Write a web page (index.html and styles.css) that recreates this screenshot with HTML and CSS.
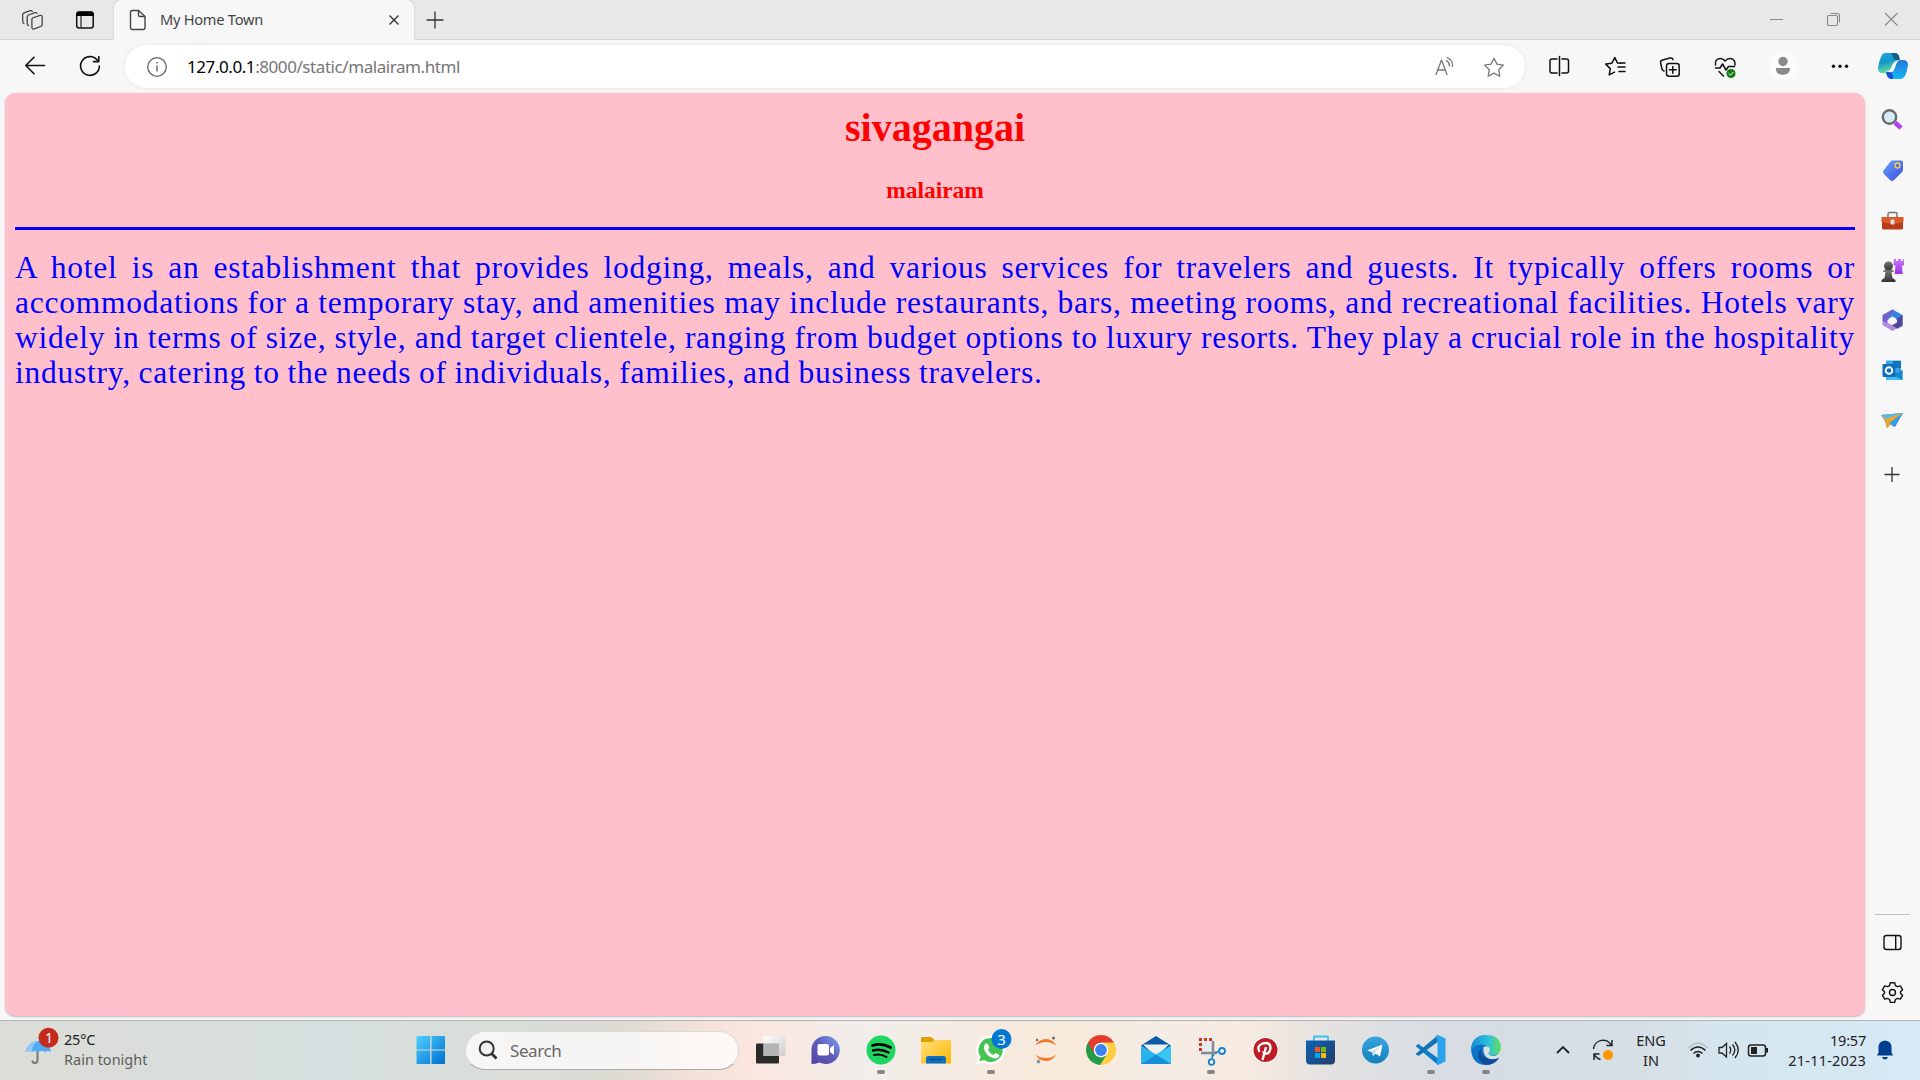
FILE: index.html
```html
<!DOCTYPE html>
<html lang="en">
<head>
<meta charset="utf-8">
<title>My Home Town</title>
<link rel="stylesheet" href="styles.css">
</head>
<body>
<header class="tabstrip">
  <div class="tab-actions">
    <svg class="icon" width="114" height="40" viewBox="0 0 114 40">
      <g fill="none" stroke="#444" stroke-width="1.3" stroke-linejoin="round" stroke-linecap="round">
        <path d="M32.5 18l7.500-2.600q2.200-.5 2.200 1.500v7.600q0 1.500-1.500 2l-6.500 2.400q-2.300.6-2.300-1.600v-7.600q0-1.300.6-1.700z"/>
        <path d="M28.500 25.500q-1.300-.3-1.300-2v-6.700q0-1.300 1.400-1.800l6.400-2.300q1.500-.4 2 .6"/>
        <path d="M24 23.500q-1.300-.4-1.300-2v-6.700q0-1.400 1.400-1.900l6.200-2.200q1.400-.4 2 .5"/>
      </g>
      <rect x="76.700" y="12" width="16.500" height="16" rx="2.500" fill="none" stroke="#111" stroke-width="1.500"/>
      <path d="M76.500 16v-2q0-2.500 2.500-2.500h12q2.500 0 2.500 2.500v2z" fill="#000"/><path d="M81 16v12" stroke="#222" stroke-width="1.200"/>
    </svg>
  </div>
  <div class="tab">
    <svg class="icon" width="20" height="24" viewBox="0 0 20 24"><g fill="none" stroke="#444" stroke-width="1.400" stroke-linejoin="round"><path d="M4.500 2.500h6l6.500 6v11q0 2-2 2h-10.500q-2 0-2-2v-15q0-2 2-2z"/><path d="M10.500 2.500v4.500q0 1.500 1.500 1.500h5"/></g></svg>
    <span class="tab-title">My Home Town</span>
    <svg class="icon tab-close" width="12" height="12" viewBox="0 0 12 12"><path d="M1.500 1.500l9 9m0-9l-9 9" stroke="#333" stroke-width="1.400"/></svg>
  </div>
  <svg class="icon new-tab" width="18" height="18" viewBox="0 0 18 18"><path d="M.5 9h17M9 .5v17" stroke="#333" stroke-width="1.300"/></svg>
  <svg class="icon window-controls" width="150" height="40" viewBox="0 0 150 40"><g fill="none" stroke="#8a8a8a" stroke-width="1.100"><path d="M0 19.500h13M115 13l12.500 12.500m0-12.500l-12.500 12.500"/><rect x="57.500" y="15.500" width="10" height="10" rx="1"/><path d="M60.500 13.500h7q2 0 2 2v7"/></g></svg>
</header>

<nav class="toolbar">
  <svg class="icon" width="125" height="53" viewBox="0 0 125 53"><g fill="none" stroke="#111" stroke-width="1.600" stroke-linecap="round" stroke-linejoin="round"><path d="M44.500 25.500h-18.500m8-8.200l-8.200 8.200 8.200 8.200"/><path d="M99.400 26a9.400 9.400 0 1 1-2.300-6.200l1.600 1.800m.1-5v5h-5.300"/></g></svg>
  <div class="address">
    <svg class="icon" width="22" height="22" viewBox="0 0 22 22"><circle cx="11" cy="11" r="9.300" fill="none" stroke="#666" stroke-width="1.300"/><path d="M11 9.500v6M11 6v1.600" stroke="#666" stroke-width="1.400"/></svg>
    <span class="url"><b>127.0.0.1</b>:8000/static/malairam.html</span>
    <svg class="icon" width="80" height="30" viewBox="0 0 80 30"><g fill="none" stroke="#777" stroke-width="1.300" stroke-linejoin="round" stroke-linecap="round"><path d="M6 22.500l5.500-14.500 5.500 14.500M7.800 18h7.400M16.500 8.500q3 2 3 5.500M17 5.500q6 2.500 5.500 9"/><path d="M64 6.200l2.900 5.900 6.500 1-4.700 4.600 1.100 6.500-5.800-3.100-5.800 3.100 1.100-6.500-4.700-4.600 6.500-1z"/></g></svg>
  </div>
  <svg class="icon" width="395" height="53" viewBox="1525 40 395 53">
    <defs>
      <linearGradient id="cpA" x1="0" y1="0" x2=".3" y2="1"><stop stop-color="#18a8e8"/><stop offset=".5" stop-color="#1596c8"/><stop offset="1" stop-color="#63dfa0"/></linearGradient>
      <linearGradient id="cpB" x1="0" y1="0" x2="0" y2="1"><stop stop-color="#2275d7"/><stop offset="1" stop-color="#18b8fa"/></linearGradient>
    </defs>
    <g fill="none" stroke="#111" stroke-width="1.500" stroke-linejoin="round" stroke-linecap="round">
      <path d="M1557 59h-5q-2 0-2 2v10q0 2 2 2h5M1562 59h4.500q2 0 2 2v10q0 2-2 2h-4.500M1559.500 56.500v19"/>
      <path d="M1621 63.300l-3.600-.4-2.600-5.400-2.900 5.700-6.200.9 4.600 4.500-1.100 6.300 5.300-2.700M1619.500 63h5.500M1618 67h7M1619 71.500h6"/>
      <path d="M1664 71q-1.500-.5-2-2l-1.400-6q-.4-2.500 2-3l7.400-2q2.500-.5 3 1.700"/><rect x="1666.500" y="63.500" width="12.700" height="12.700" rx="2.500"/><path d="M1672.800 66.500v6.700m-3.400-3.400h6.800"/>
      <path d="M1715.500 65q-.8-6 4.500-6.500 3-.2 5 2.500 2.500-2.800 5.500-2.500 5 .6 4.500 6.500M1715.500 68h4.500l2.500-4 3.500 6 2.500-3.500h6M1719 71.500l4.500 4.500"/>
    </g>
    <circle cx="1731" cy="73.500" r="4.500" fill="#107c10"/><path d="M1728.700 73.500l1.700 1.700 3-3.200" fill="none" stroke="#fff"/>
    <circle cx="1783" cy="66" r="14" fill="#fcfcfc"/><circle cx="1783" cy="61.500" r="4.700" fill="#8b8b8b"/><path d="M1776 68h14v1q0 5.700-7 5.700t-7-5.700z" fill="#8b8b8b"/>
    <g fill="#111"><circle cx="1833.500" cy="66.300" r="1.700"/><circle cx="1840" cy="66.300" r="1.700"/><circle cx="1846.500" cy="66.300" r="1.700"/></g>
    <path d="M1885 53h9q3 0 4 3l1 4q-5 0-7 6l-2 5q-1 2-5 2h-3q-4 0-4-5 1-7 3-11 1.500-4 4-4z" fill="url(#cpA)"/>
    <path d="M1891 53h4q3 0 4 3l1 4h-4q-2 0-3-3z" fill="#155c82"/>
    <path d="M1901 79h-9q-4 0-5-4l-1-3q4 0 6-6l2-4q1-2 5-2h4q5 0 5 5-1 7-3 11-1.500 3-4 3z" fill="url(#cpB)"/>
    <path d="M1893 79q-5 0-6-3.500l-1-3 5-1.500 2 5z" fill="#1750d8"/>
    <path d="M1886 72q4-1 5.500-5 2-7 8.500-7-3 1-4 5l-2 5q-1.500 3-5 2z" fill="#f7f7f7"/>
  </svg>
</nav>

<main class="content">
  <article class="page">
    <h1>sivagangai</h1>
    <h3>malairam</h3>
    <hr>
    <p>
      <span class="line">A hotel is an establishment that provides lodging, meals, and various services for travelers and guests. It typically offers rooms or</span>
      <span class="line">accommodations for a temporary stay, and amenities may include restaurants, bars, meeting rooms, and recreational facilities. Hotels vary</span>
      <span class="line">widely in terms of size, style, and target clientele, ranging from budget options to luxury resorts. They play a crucial role in the hospitality</span>
      <span class="line last">industry, catering to the needs of individuals, families, and business travelers.</span>
    </p>
  </article>
  <aside class="sidebar">
    <svg class="icon" width="54" height="410" viewBox="1866 93 54 410">
      <defs>
        <linearGradient id="tag" x1="0" y1="0" x2="1" y2="1"><stop stop-color="#6aa5ff"/><stop offset="1" stop-color="#3a49e0"/></linearGradient>
        <linearGradient id="rook" x1="0" y1="0" x2="0" y2="1"><stop stop-color="#c77cf8"/><stop offset="1" stop-color="#a12cf0"/></linearGradient>
        <linearGradient id="pawn" x1="0" y1="0" x2="0" y2="1"><stop stop-color="#777"/><stop offset="1" stop-color="#333"/></linearGradient>
      </defs>
      <path d="M1895 122.500l6 5.500" stroke="#b63df0" stroke-width="4.500" stroke-linecap="butt"/>
      <circle cx="1889.500" cy="117" r="6.700" fill="#d7ecfb" stroke="#6a6a6a" stroke-width="2.400"/>
      <path d="M1892 160.500h9q2 0 2 2v7q0 1.500-1 2.500l-8 8q-2 2-4 0l-6-6q-2-2 0-4l6-8q1-1.500 2-1.500z" fill="url(#tag)"/><circle cx="1897.500" cy="165.500" r="2.500" fill="#5272d9" stroke="#ffd34a" stroke-width="1.300"/>
      <path d="M1888 217v-3q0-1.500 1.500-1.500h6q1.500 0 1.500 1.500v3" fill="none" stroke="#777" stroke-width="1.500"/>
      <rect x="1882" y="217" width="21" height="12.500" rx="1.500" fill="#b93a17"/><path d="M1881.500 217h22v5q-11 3-22 0z" fill="#dc5a2a"/><rect x="1890.500" y="219.500" width="4" height="5" rx="1" fill="#ddd"/>
      <path d="M1894 259h2v2h2v-2h3v2h2v-2h1v6l-2 1 .7 8h-8l.8-8-2-1z" fill="url(#rook)"/>
      <g fill="url(#pawn)"><circle cx="1888.500" cy="266" r="4.500"/><path d="M1883.500 270h10v2h-2l1 6 3 2v2h-14v-2l3-2 1-6h-2z"/></g>
      <path d="M1892.500 309.500l10 5.500v11l-5.500 3v-9l-4.500-3-5 3-5-4z" fill="#3984df"/><path d="M1882.500 315l10-5.500 2 1-7 8v6l-5-3z" fill="#7160cf"/><path d="M1882.500 321l5 2 5 2 5-3 5 3-10 6-10-6z" fill="#b18be0"/><path d="M1897 319l5.500-4v10.500l-5.500 3-5-3 5-3z" fill="#51469c"/><path d="M1892.500 316.500l3.500 2v4l-3.500 2-3.500-2v-4z" fill="#f7f7f7"/>
      <rect x="1886" y="360.500" width="15" height="15" rx="1" fill="#34a5e8"/><path d="M1886 368h7v-7h8v7h-8v7h-7z" fill="#1474bd"/><path d="M1886 371l8 5 8.500-6v9q0 1-1 1h-15.500z" fill="#3cbcf2"/><path d="M1902.500 370v10l-10-5z" fill="#1a87cc"/><rect x="1882.500" y="364" width="13" height="13" rx="1" fill="#0f6cbd"/><circle cx="1889" cy="370.500" r="3.300" fill="none" stroke="#fff" stroke-width="1.900"/>
      <path d="M1881 415l22-2-8 14-5-3-3 4-2-7z" fill="#2687df"/><path d="M1881 415l22-2-16 15-1.500-7z" fill="#f7a51b"/><path d="M1881 415l22-2-17 6z" fill="#5ab8f3"/><path d="M1903 413l-14 10 5 4z" fill="#379fee"/>
      <path d="M1884.500 474.500h15M1892 467v15" stroke="#333" stroke-width="1.300"/>
    </svg>
    <svg class="icon" width="54" height="110" viewBox="1866 910 54 110">
      <path d="M1875 914.500h35" stroke="#c0c0c0"/>
      <g fill="none" stroke="#111" stroke-width="1.400"><rect x="1884" y="935.500" width="17" height="14" rx="2.500"/><path d="M1895.700 935.500v14"/><circle cx="1892.500" cy="992.500" r="3"/>
      <path stroke-linejoin="round" d="M1890.300 982.700h4.400l.7 2.900 2 1.100 2.900-.8 2.300 3.800-2.100 2.100v1.500l2.100 2.100-2.300 3.800-2.900-.8-2 1.100-.7 2.900h-4.400l-.7-2.900-2-1.100-2.900.8-2.300-3.800 2.100-2.100v-1.500l-2.100-2.100 2.300-3.800 2.900.8 2-1.100z"/></g>
    </svg>
  </aside>
</main>

<footer class="taskbar">
  <div class="weather">
    <svg class="icon" width="40" height="59" viewBox="22 1021 40 59">
      <path d="M37.500 1049v11q0 3-2.700 3-2.300 0-2.300-2.500" fill="none" stroke="#777" stroke-width="2"/><path d="M25.500 1052q2-10 12.500-11 11 1 13 11-3-2-6 0-3.500-2-7 0-3-2-6 0-3-2-6.500 0z" fill="#50a9f4"/><path d="M32 1052q0-8 6-11-10 1-12.500 11 3-2 6.500 0z" fill="#8bcafb"/>
      <circle cx="48.500" cy="1037.700" r="10" fill="#c42b1c"/><text class="badge-one" x="49" y="1043" text-anchor="middle">1</text>
    </svg>
    <div class="weather-text"><span class="temp">25°C</span><span class="forecast">Rain tonight</span></div>
  </div>
  <svg class="icon start" width="30" height="30" viewBox="0 0 30 30">
    <defs><linearGradient id="win" gradientUnits="userSpaceOnUse" x1="0" y1="0" x2="28" y2="28"><stop stop-color="#53d2ff"/><stop offset="1" stop-color="#0072d2"/></linearGradient></defs>
    <path fill="url(#win)" d="M1.500 1h12.700v13.500h-13.700v-12.500q0-1 1-1zM15.500 1h12.500q1 0 1 1v12.500h-13.500zM.5 15.500h13.700v13.500h-12.700q-1 0-1-1zM15.500 15.500h13.500v12.500q0 1-1 1h-12.500z"/>
  </svg>
  <div class="search">
    <svg class="icon" width="20" height="20" viewBox="0 0 20 20"><circle cx="8.700" cy="8.500" r="7" fill="#f0f0f0" stroke="#333" stroke-width="2"/><path d="M13.500 13.500l5 5" stroke="#333" stroke-width="2.800"/></svg>
    <span>Search</span>
  </div>
  <div class="apps">
    <svg class="icon" viewBox="0 0 55 60"><defs><linearGradient id="tv" x1="0" y1="0" x2="1" y2="1"><stop stop-color="#fff"/><stop offset="1" stop-color="#c9c9c9"/></linearGradient></defs><rect x="13" y="23.500" width="23" height="20" rx="1" fill="#2a2a29"/><rect x="20.500" y="16" width="22" height="20" rx="1" fill="url(#tv)" opacity=".9"/><path d="M20.500 23.500h15.500v12.500h-15.500z" fill="#b5b5b5"/></svg>
    <svg class="icon" viewBox="0 0 55 60"><defs><linearGradient id="chat" x1="1" y1="0" x2="0" y2="1"><stop stop-color="#7aa5f4"/><stop offset=".5" stop-color="#605bb9"/><stop offset="1" stop-color="#5146a1"/></linearGradient></defs><path d="M27.500 16a14 14 0 1 1-6 26.500q-4 1.500-8 1.500v-14a14 14 0 0 1 14-14z" fill="url(#chat)"/><rect x="19.500" y="24" width="11.500" height="11.500" rx="2" fill="#fff"/><path d="M32 28l4-3v10l-4-3z" fill="#fff"/></svg>
    <svg class="icon" viewBox="0 0 55 60"><circle cx="28" cy="30" r="14.500" fill="#1ed760"/><g fill="none" stroke="#000" stroke-linecap="round"><path d="M19.500 25.500q9-3 18 2" stroke-width="2.800"/><path d="M20 30.500q8-2.300 15.500 2" stroke-width="2.400"/><path d="M21 35q6.500-1.600 12.500 2" stroke-width="2"/></g><rect class="run" x="24" y="50" width="8" height="4" rx="2"/></svg>
    <svg class="icon" viewBox="0 0 55 60"><defs><linearGradient id="fold" x1="0" y1="0" x2="1" y2="1"><stop stop-color="#ffe180"/><stop offset="1" stop-color="#ffb500"/></linearGradient></defs><path d="M13 18q0-1 1-1h9.500l3 3v5h-13.500z" fill="#e0a000"/><path d="M13 22h11l3-2h15q1 0 1 1v22.500h-30z" fill="url(#fold)"/><path d="M18 43.500v-5q0-2.500 2.500-2.500h15q2.500 0 2.500 2.500v5z" fill="#0a70c4"/><path d="M21.500 39.500h13" stroke="#07457e" stroke-width="1.200"/></svg>
    <svg class="icon" viewBox="0 0 55 60"><path d="M27.500 15.500a14.500 14.500 0 1 1-7 27l-7.500 2.300 2.200-7.300a14.500 14.500 0 0 1 12.300-22z" fill="#fff"/><path d="M27.500 18a12 12 0 1 1-6.500 22l-4.800 1.300 1.400-4.600a12 12 0 0 1 9.900-18.700z" fill="#43c352"/><path d="M22.500 23.500l2.300.2 1.600 4-1.500 2q2 4 5.500 5.300l2-2 4 2q-.5 4-5 3.500-8-1.500-10.500-10 0-3.500 1.600-5z" fill="#fff"/><circle cx="38.500" cy="19" r="10" fill="#0078d4"/><text class="badge-three" x="38.500" y="24.500" text-anchor="middle">3</text><rect class="run" x="24" y="50" width="8" height="4" rx="2"/></svg>
    <svg class="icon" viewBox="0 0 55 60"><path d="M17.500 25.500q3.500-6.500 10.500-6.500t10 6.500q-4-3.500-10-3.500t-10.500 3.500zM17.500 34.500q3.500 6.500 10.500 6.500t10-6.500q-4 3.500-10 3.500t-10.500-3.500z" fill="#f37726"/><circle cx="35.500" cy="18" r="1.500" fill="#666"/><circle cx="19" cy="20" r="1.200" fill="#666"/><circle cx="20.500" cy="41.500" r="1.900" fill="#999"/></svg>
    <svg class="icon" viewBox="0 0 55 60"><circle cx="28" cy="30" r="15" fill="#ffcd40"/><path d="M28 30l-13-7.500a15 15 0 0 0 11.500 22.400z" fill="#229c4a"/><path d="M28 37.500l6.500-4-7.500 11.500-5-5z" fill="#229c4a"/><path d="M15 22.500a15 15 0 0 1 26 0h-13l-7 11z" fill="#e33b2e"/><circle cx="28" cy="30" r="7.300" fill="#fff"/><circle cx="28" cy="30" r="5.900" fill="#3e82ef"/></svg>
    <svg class="icon" viewBox="0 0 55 60"><path d="M13 25.500l15-9.500 15 9.500-15 12z" fill="#0b5aa7"/><path d="M15 24.500h26l-13 12z" fill="#f0f0f0"/><path d="M13 25.500l15 9 15-9v18.500h-30z" fill="#28b3ec"/><path d="M13 44l30-18.500v18.500z" fill="#168ed9"/><path d="M28 34.500l15-9v18.500z" fill="#38c7f3"/></svg>
    <svg class="icon" viewBox="0 0 55 60"><rect x="14" y="16" width="18" height="20" rx="2" fill="#e6e9ed"/><path d="M17.500 31v-11.500h12" fill="none" stroke="#d13c12" stroke-width="3" stroke-dasharray="3 2"/><path d="M18 33h16M30 21v15" stroke="#888" stroke-width="2.500"/><g fill="none" stroke="#1683d0" stroke-width="1.800"><path d="M32 32.500l4-1M30 34l-1 4"/><circle cx="39" cy="31" r="3"/><circle cx="28.500" cy="42" r="2.800"/></g><rect class="run" x="24" y="50" width="8" height="4" rx="2"/></svg>
    <svg class="icon" viewBox="0 0 55 60"><circle cx="27.500" cy="30" r="13" fill="#fff"/><circle cx="27.500" cy="30" r="12" fill="#bd1c24"/><path d="M24.500 40l3.500-13M21.500 32q-3.500-6 3-8.500 8-2 8 4.500-1 6.500-5 5.500-2 0-2-2" fill="none" stroke="#fff" stroke-width="2.400"/></svg>
    <svg class="icon" viewBox="0 0 55 60"><defs><linearGradient id="store" x1="0" y1="0" x2="1" y2="1"><stop stop-color="#0b65b8"/><stop offset="1" stop-color="#223d69"/></linearGradient></defs><path d="M21 22v-5q0-.5.500-.5h13q.5 0 .5.500v5" fill="none" stroke="#37c3f2" stroke-width="1.800"/><path d="M13 20.500h29v20q0 4-4 4h-21q-4 0-4-4z" fill="url(#store)"/><path d="M22 27h5v5h-5z" fill="#f25022"/><path d="M28 27h5v5h-5z" fill="#7fba00"/><path d="M22 33h5v5h-5z" fill="#00a4ef"/><path d="M28 33h5v5h-5z" fill="#ffb900"/></svg>
    <svg class="icon" viewBox="0 0 55 60"><defs><linearGradient id="tg" x1="0" y1="0" x2="0" y2="1"><stop stop-color="#36a5dd"/><stop offset="1" stop-color="#1480be"/></linearGradient></defs><circle cx="27.500" cy="30" r="13.500" fill="url(#tg)"/><path d="M19 30.500l15.500-6-2.500 12-4.500-3-2.500 2.500-1-4z" fill="#fff"/><path d="M24 32l8.500-6-6.500 7-.5 3z" fill="#b4d5e8"/></svg>
    <svg class="icon" viewBox="0 0 55 60"><path d="M12.500 26l3-2 20.500 15-1.500 5.500z" fill="#0c7cc4"/><path d="M12.500 34l3 2 20.500-15-1.500-5.500z" fill="#1574b5"/><path d="M35 15l7.500 3.500v23l-7.500 3.500-2-1 1.500-3v-21l-2-4z" fill="#2aa3ee"/><rect class="run" x="24" y="50" width="8" height="4" rx="2"/></svg>
    <svg class="icon" viewBox="0 0 55 60"><defs><linearGradient id="ed" x1="0" y1="0" x2="1" y2="0"><stop stop-color="#168bd8"/><stop offset=".6" stop-color="#2fc3da"/><stop offset="1" stop-color="#61e052"/></linearGradient></defs><path d="M13 29q1 16 15 16 9 0 13-7-4 1-7 0l6-4 1-10-13-9q-13 0-15 14z" fill="#0c73cb"/><path d="M13 31q0-15 15-16 14 0 15 12 0 7-7 8.500-5 .5-6-2 2-2 1-5-2-4-8-4-7 .5-10 6.500z" fill="url(#ed)"/><path d="M25.500 27q4-2 6 1 1 3-1 5 0 2.500 5 3 3 0 6-1.500l-2 4q-5 2-9 0-6-3-5-11.500z" fill="#dcdfe4"/><path d="M23.500 27.500q-1.500 6 3 9.500 6 4 14.500 1-5 7-13 7-9-3-7.500-12.500z" fill="#104e99"/><rect class="run" x="24" y="50" width="8" height="4" rx="2"/></svg>
  </div>
  <svg class="icon tray-left" width="70" height="60" viewBox="1550 1020 70 60"><path d="M1557 1053l6-6 6 6" fill="none" stroke="#222" stroke-width="1.800"/><g fill="none" stroke="#222" stroke-width="1.500"><path d="M1593.500 1049a9.500 9.500 0 0 1 18-3.500M1612 1040v5.500h-5.500M1594 1060v-6h5.500M1594.500 1055q2 3.500 6 4.500"/></g><circle cx="1608" cy="1055" r="5" fill="#ff9800"/></svg>
  <div class="language"><span>ENG</span><span>IN</span></div>
  <svg class="icon status" width="82" height="60" viewBox="1686 1020 82 60"><g fill="none" stroke="#222" stroke-width="1.500"><path d="M1688.500 1048q9.500-9.500 19 0" stroke="#b6bdc2"/><path d="M1690.500 1050.500q7.500-7 15 0M1693.500 1053.500q4.500-4 9 0"/><path d="M1719 1047.500h3l4.500-4v13.500l-4.500-4h-3zM1729.500 1046.500q2.500 3.500 0 7M1732.500 1044.500q4.500 5.500 0 11M1735 1042q6.500 8 0 16" stroke-width="1.300"/><rect x="1748.500" y="1045" width="17" height="11" rx="2.500"/></g><circle cx="1698" cy="1055.500" r="1.900" fill="#222"/><rect x="1751" y="1047" width="6" height="7" fill="#222"/><path d="M1766 1048h2v4.500h-2z" fill="#222"/></svg>
  <div class="clock"><span>19:57</span><span class="date">21-11-2023</span></div>
  <svg class="icon bell" width="18" height="20" viewBox="0 0 18 20"><path d="M9 .5q6.500.5 6.500 7v5l1.500 3h-16l1.500-3v-5q0-6.500 6.500-7zM6 17h6q-1 2.500-3 2.500t-3-2.500z" fill="#003e92"/></svg>
</footer>
</body>
</html>
```
FILE: styles.css
```css
* { box-sizing: border-box; }
body {
  margin: 0;
  width: 1920px;
  height: 1080px;
  display: flex;
  flex-direction: column;
  overflow: hidden;
  background: #f7f7f7;
  font-family: "Noto Sans", sans-serif;
}
.icon { display: block; flex: none; }

.tabstrip {
  height: 40px;
  display: flex;
  align-items: center;
  background: #e8e8e8;
  box-shadow: inset 0 -1px 0 #d5d5d5;
}
.tab-actions { width: 114px; }
.tab {
  width: 300px;
  height: 40px;
  padding: 0 14px 0 14px;
  display: flex;
  align-items: center;
  background: #f7f7f7;
  border-radius: 8px 8px 0 0;
  box-shadow: 0 0 2px #bbb;
  clip-path: inset(0 -3px 0 -3px);
}
.tab-title {
  margin-left: 12px;
  padding-bottom: 2px;
  font-size: 14.600px;
  letter-spacing: -.25px;
  color: #454545;
  white-space: nowrap;
}
.tab-close { margin-left: auto; }
.new-tab { margin-left: 12px; }
.window-controls { margin-left: auto; }

.toolbar { height: 53px; display: flex; }
.address {
  width: 1400px;
  height: 43px;
  margin-top: 5px;
  padding: 0 15px 0 21px;
  display: flex;
  align-items: center;
  border-radius: 22px;
  background: #fff;
  box-shadow: 0 0 4px rgba(0, 0, 0, .08);
}
.url {
  flex: 1;
  margin-left: 19px;
  font-size: 17px;
  letter-spacing: -.43px;
  color: #767676;
}
.url b { font-weight: 400; color: #000; }

.content { flex: 1; display: flex; }
.page {
  width: 1860px;
  margin: 0 1px 4px 5px;
  padding: 10px;
  border-radius: 10px;
  background: #ffc0cb;
  box-shadow: 0 1px 2px rgba(0, 0, 0, .25);
  font-family: "Liberation Serif", serif;
}
.page h1 {
  margin: 0;
  text-align: center;
  font-size: 40px;
  line-height: 50px;
  color: #f00;
}
.page h3 {
  margin: 24px 0 0;
  text-align: center;
  font-size: 23.400px;
  line-height: 27px;
  color: #f00;
}
.page hr { height: 3px; margin: 23px 0 20px; border: 0; background: #00f; }
.page p {
  margin: 0;
  font-size: 31.500px;
  line-height: 35px;
  letter-spacing: .75px;
  word-spacing: -.9px;
  color: #00f;
}
.line { display: block; text-align-last: justify; }
.last { text-align-last: left; }
.sidebar {
  width: 54px;
  display: flex;
  flex-direction: column;
  justify-content: space-between;
}

.taskbar {
  height: 60px;
  display: flex;
  align-items: center;
  border-top: 1px solid #b0b3b5;
  background: linear-gradient(90deg, #dcddd6 0, #d9dddb 150px, #d6dfdf 330px, #d9deda 460px, #dcdbd4 620px, #f3e0d8 690px, #fbe7e0 760px, #f2eeeb 870px, #f7eadf 1000px, #f8eadb 1070px, #f4ece5 1160px, #f8ebe0 1240px, #e5e2e0 1320px, #dcdfe3 1390px, #d6dce4 1500px, #d7dfe6 1640px, #d5e6ef 1730px, #d6e9f4 1920px);
}
.taskbar > .icon, .apps { margin-top: -1px; }
.weather { width: 416px; display: flex; padding-left: 22px; }
.weather-text { padding-top: 8px; display: flex; flex-direction: column; margin-left: 2px; }
.weather-text span, .language span, .clock span { font-size: 14.500px; line-height: 20px; white-space: nowrap; }
.temp { color: #1d1d1d; letter-spacing: -.2px; }
.forecast { color: #5d5e5b; }
.badge-one { font-size: 14px; fill: #fff; }
.badge-three { font-size: 15px; fill: #fff; }
.search {
  width: 274px;
  height: 39px;
  margin-left: 19px;
  padding-left: 12px;
  padding-bottom: 1px;
  display: flex;
  align-items: center;
  gap: 12px;
  border: 1px solid rgba(160, 160, 160, .35);
  border-bottom-color: #aaa;
  border-radius: 20px;
  background: rgba(255, 255, 255, .72);
  font-size: 17px;
  letter-spacing: -.4px;
  color: #676767;
}
.apps { display: flex; margin-left: 4px; }
.apps .icon { width: 55px; height: 60px; }
.run { fill: #858585; }
.tray-left { margin-left: 37px; }
.language { width: 50px; margin-left: 6px; padding-bottom: 2px; display: flex; flex-direction: column; align-items: center; color: #222; }
.status { margin-left: 10px; }
.clock { width: 98px; padding-bottom: 2px; display: flex; flex-direction: column; align-items: flex-end; color: #222; letter-spacing: -.2px; }
.date { letter-spacing: .2px; }
.bell { margin-left: 10px; }
```
